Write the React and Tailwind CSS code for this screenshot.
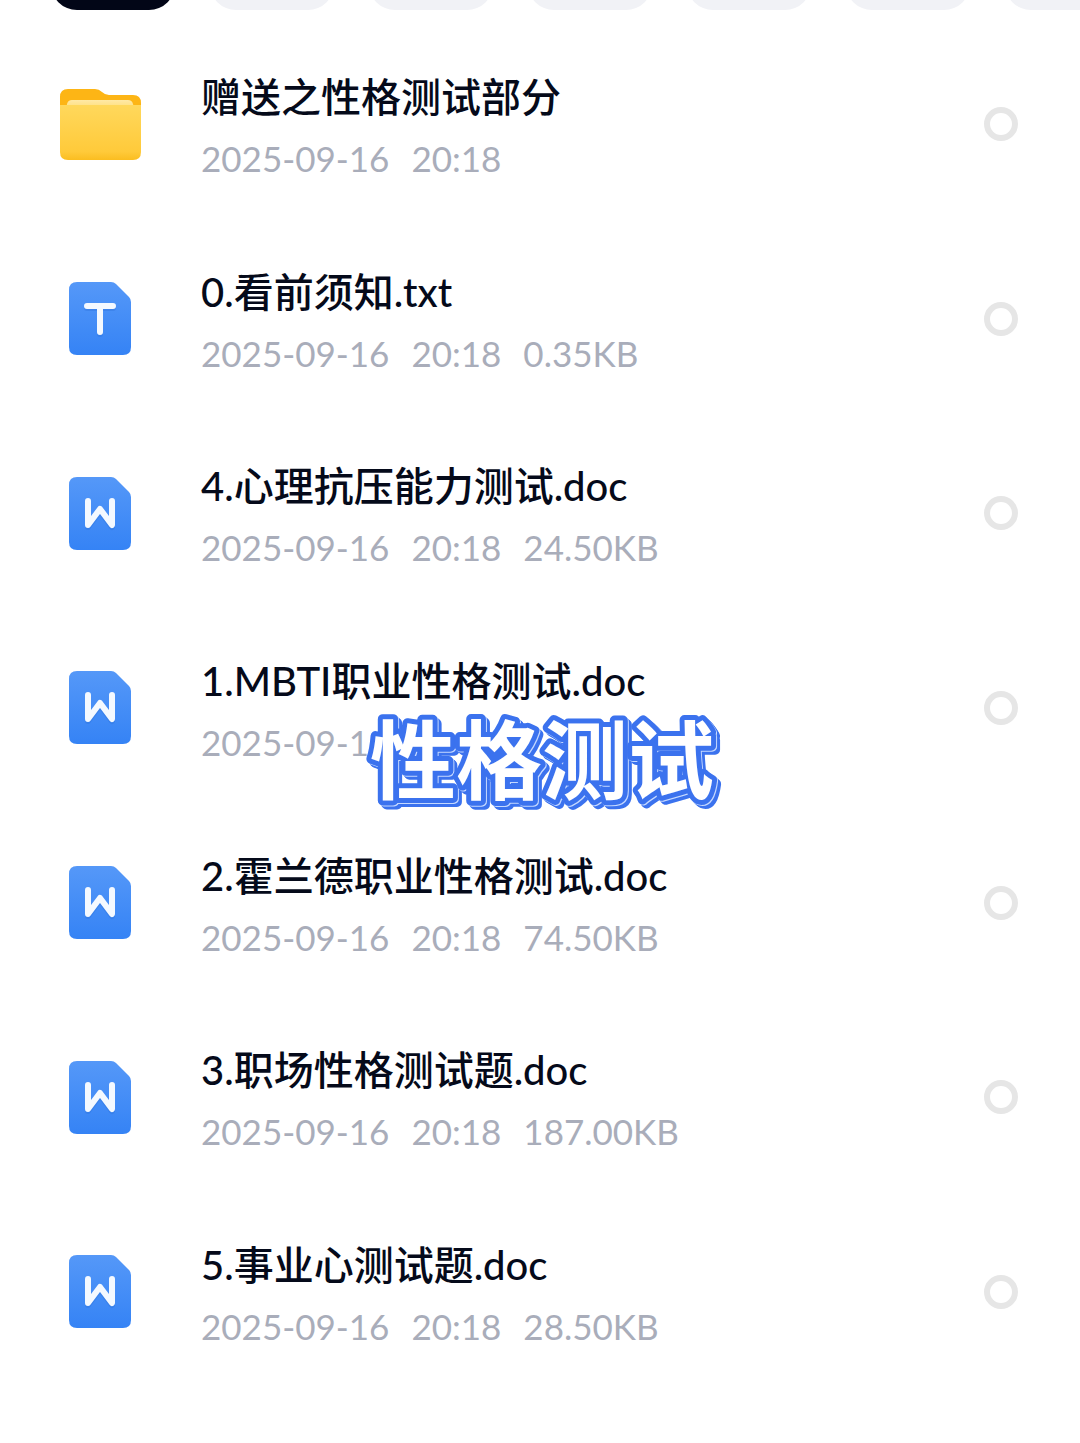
import React from "react";

const files = [
  { kind: "folder", name: "赠送之性格测试部分", date: "2025-09-16", time: "20:18", size: "" },
  { kind: "txt", name: "0.看前须知.txt", date: "2025-09-16", time: "20:18", size: "0.35KB" },
  { kind: "doc", name: "4.心理抗压能力测试.doc", date: "2025-09-16", time: "20:18", size: "24.50KB" },
  { kind: "doc", name: "1.MBTI职业性格测试.doc", date: "2025-09-1", time: "", size: "" },
  { kind: "doc", name: "2.霍兰德职业性格测试.doc", date: "2025-09-16", time: "20:18", size: "74.50KB" },
  { kind: "doc", name: "3.职场性格测试题.doc", date: "2025-09-16", time: "20:18", size: "187.00KB" },
  { kind: "doc", name: "5.事业心测试题.doc", date: "2025-09-16", time: "20:18", size: "28.50KB" },
];

const tabs = [1, 2, 3, 4, 5, 6, 7];

function FolderIcon() {
  return (
    <svg width="82" height="74" viewBox="0 0 82 74" aria-hidden="true">
      <defs>
        <linearGradient id="folderFront" x1="0" y1="0" x2="0" y2="1">
          <stop offset="0" stopColor="#ffd85c" />
          <stop offset="0.85" stopColor="#ffca3a" />
          <stop offset="1" stopColor="#fbbd20" />
        </linearGradient>
        <linearGradient id="folderPaper" x1="0" y1="0" x2="0" y2="1">
          <stop offset="0" stopColor="#ffe9a6" />
          <stop offset="1" stopColor="#ffdb6a" />
        </linearGradient>
      </defs>
      <path d="M1 10Q1 2 9 2H36Q40 2 43 5Q46 8 50 8H74Q82 8 82 16V40H1Z" fill="#fdb515" />
      <path d="M7 24L8 17Q9 13 13 13H69Q73 13 74 17L76 24Z" fill="url(#folderPaper)" />
      <path d="M1 18H82V65Q82 73 74 73H9Q1 73 1 65Z" fill="url(#folderFront)" />
    </svg>
  );
}

function DocumentIcon({ kind }) {
  const glyph = kind === "txt" ? "M18 24H44M31 24V50" : "M19 24V48L31 32L43 48V24";
  return (
    <svg width="62" height="73" viewBox="0 0 62 73" aria-hidden="true">
      <defs>
        <linearGradient id={"sheet-" + kind} x1="0" y1="0" x2="0" y2="1">
          <stop offset="0" stopColor="#5598f8" />
          <stop offset="1" stopColor="#3583f5" />
        </linearGradient>
      </defs>
      <path
        d="M8 0H42Q45 0 47 2L60 15Q62 17 62 20V65Q62 73 54 73H8Q0 73 0 65V8Q0 0 8 0Z"
        fill={"url(#sheet-" + kind + ")"}
      />
      <g fill="none" strokeWidth="6" strokeLinecap="round" strokeLinejoin="round">
        <path d={glyph} stroke="#2c6fd6" strokeOpacity="0.35" transform="translate(0 2)" />
        <path d={glyph} stroke="#f4f9ff" />
      </g>
    </svg>
  );
}

function FileRow({ file, index }) {
  const id = "file-" + index;
  return (
    <li className="flex items-center pl-[59px] pr-[62px]">
      <div className="flex w-[82px] shrink-0 justify-center">
        {file.kind === "folder" ? <FolderIcon /> : <DocumentIcon kind={file.kind} />}
      </div>
      <div className="ml-[60px] min-w-0 flex-1 pt-1">
        <label htmlFor={id} className="block whitespace-nowrap text-[40px] font-medium leading-[64px] text-[#050a1a]">
          {file.name}
        </label>
        <p className="flex gap-[22px] whitespace-nowrap text-[35px] leading-[58px] text-[#a9adba]">
          <span>{file.date}</span>
          {file.time && <span>{file.time}</span>}
          {file.size && <span>{file.size}</span>}
        </p>
      </div>
      <input
        id={id}
        type="checkbox"
        className="size-[34px] shrink-0 appearance-none rounded-full border-[6px] border-[#e6e6e6] bg-white checked:bg-[#3583f5]"
      />
    </li>
  );
}

function Sticker() {
  return (
    <svg
      width="380"
      height="110"
      viewBox="0 0 380 110"
      className="overflow-visible [filter:drop-shadow(1px_1px_0_#c4d8ff)_drop-shadow(3px_3px_0_#3b72ee)]"
    >
      <text
        x="190"
        y="82"
        textAnchor="middle"
        fontSize="86"
        fontWeight="700"
        fill="#ffffff"
        stroke="#3b72ee"
        strokeWidth="10"
        strokeLinejoin="round"
        paintOrder="stroke"
      >
        性格测试
      </text>
    </svg>
  );
}

export default function App() {
  return (
    <div className="flex min-h-screen flex-col overflow-hidden bg-white font-[Lato,'Noto_Sans_CJK_SC',sans-serif]">
      <nav className="flex h-[10px] items-end gap-[35px] overflow-hidden pl-[51px]">
        {tabs.map((tab) => (
          <button
            key={tab}
            type="button"
            aria-label={"分类 " + tab}
            className={
              tab === 1
                ? "h-16 w-[124px] shrink-0 rounded-[26px] bg-[#020617]"
                : "h-16 w-[124px] shrink-0 rounded-[26px] bg-[#f1f2f6]"
            }
          />
        ))}
      </nav>
      <main className="relative flex flex-1 flex-col pb-[54px] pt-[17px]">
        <ul className="grid flex-1 auto-rows-fr">
          {files.map((file, index) => (
            <FileRow key={file.name} file={file} index={index} />
          ))}
        </ul>
        <div className="pointer-events-none absolute inset-x-0 top-1/2 flex -translate-y-4 justify-center pl-1">
          <Sticker />
        </div>
      </main>
    </div>
  );
}
